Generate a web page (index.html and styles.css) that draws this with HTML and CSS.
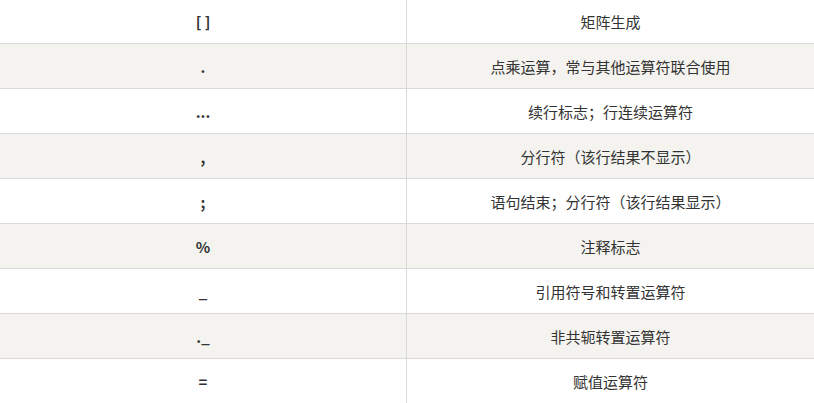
FILE: index.html
```html
<!DOCTYPE html>
<html lang="zh">
<head>
<meta charset="utf-8">
<link rel="stylesheet" href="styles.css">
</head>
<body>
<div class="table">
  <div class="row"><div class="op">[ ]</div><div class="desc">矩阵生成</div></div>
  <div class="row alt"><div class="op">.</div><div class="desc">点乘运算，常与其他运算符联合使用</div></div>
  <div class="row"><div class="op">...</div><div class="desc">续行标志；行连续运算符</div></div>
  <div class="row alt"><div class="op">,</div><div class="desc">分行符（该行结果不显示）</div></div>
  <div class="row"><div class="op">;</div><div class="desc">语句结束；分行符（该行结果显示）</div></div>
  <div class="row alt"><div class="op">%</div><div class="desc">注释标志</div></div>
  <div class="row"><div class="op">_</div><div class="desc">引用符号和转置运算符</div></div>
  <div class="row alt"><div class="op">._</div><div class="desc">非共轭转置运算符</div></div>
  <div class="row"><div class="op">=</div><div class="desc">赋值运算符</div></div>
</div>
</body>
</html>
```
FILE: styles.css
```css
html, body {
  margin: 0;
  padding: 0;
  background: #fff;
}
body {
  font-family: "Noto Sans CJK SC", "Noto Sans", sans-serif;
  font-size: 15px;
  color: #333;
  overflow: hidden;
}
.table {
  margin-top: -1px;
  width: 814px;
}
.row {
  display: grid;
  grid-template-columns: 407px 1fr;
  height: 45px;
  box-sizing: border-box;
  border-bottom: 1px solid #d9d9d9;
}
.row.alt {
  background: #f4f3ef;
}
.op, .desc {
  display: flex;
  align-items: center;
  justify-content: center;
  line-height: 20px;
}
.op {
  border-right: 1px solid #d9d9d9;
  font-family: "Noto Sans CJK SC", "Noto Sans", sans-serif;
  font-weight: 700;
  padding-top: 2px;
}
.desc {
  padding-top: 2px;
}
```
